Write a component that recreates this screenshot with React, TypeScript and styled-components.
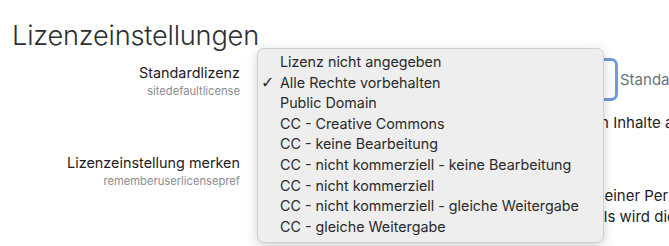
import React from "react";
import styled, { createGlobalStyle } from "styled-components";

const GlobalStyle = createGlobalStyle`
  html, body {
    margin: 0;
    height: 100%;
    background: #ffffff;
  }
  body {
    font-family: Inter, "Noto Sans", "Liberation Sans", sans-serif;
    color: #1d2125;
  }
  #root {
    min-height: 100%;
  }
`;

const options = [
  "Lizenz nicht angegeben",
  "Alle Rechte vorbehalten",
  "Public Domain",
  "CC - Creative Commons",
  "CC - keine Bearbeitung",
  "CC - nicht kommerziell - keine Bearbeitung",
  "CC - nicht kommerziell",
  "CC - nicht kommerziell - gleiche Weitergabe",
  "CC - gleiche Weitergabe",
];

const App: React.FC = () => {
  const selected = "Alle Rechte vorbehalten";
  return (
    <>
      <GlobalStyle />
      <Page>
        <Title>Lizenzeinstellungen</Title>
        <Setting>
          <LabelCol>
            <Label>Standardlizenz</Label>
            <Key>sitedefaultlicense</Key>
          </LabelCol>
          <Field>
            <ControlLine $height={43}>
              <SelectWrap>
                <Select>{selected}</Select>
                <Menu>
                  {options.map((o) => (
                    <Option key={o} $checked={o === selected}>
                      {o}
                    </Option>
                  ))}
                </Menu>
              </SelectWrap>
              <Default>Standard: Alle Rechte vorbehalten</Default>
            </ControlLine>
            <Description>
              <DescText>
                Die Standard-Lizenz für die Veröffentlichung von Inhalte auf dieser Website.
              </DescText>
            </Description>
          </Field>
        </Setting>
        <Setting>
          <LabelCol>
            <Label>Lizenzeinstellung merken</Label>
            <Key>rememberuserlicensepref</Key>
          </LabelCol>
          <Field>
            <ControlLine $height={26}>
              <Checkbox />
              <Default>Standard: Ja</Default>
            </ControlLine>
            <Description>
              <DescText>
                Wenn aktiviert, wird die zuletzt gewählte Lizenz einer Person gespeichert
                <br />
                und beim Hochladen vorausgewählt. Anderenfalls wird die Standardlizenz
                verwendet.
              </DescText>
            </Description>
          </Field>
        </Setting>
      </Page>
    </>
  );
};

export default App;

const Page = styled.div`
  box-sizing: border-box;
  min-height: 246px;
  padding: 18px 0 0 12px;
`;

const Title = styled.h2`
  margin: 0 0 4px;
  font-size: 27.2px;
  line-height: 36px;
  font-weight: 300;
  color: #2b2f33;
  letter-spacing: -0.2px;
`;

const Setting = styled.div`
  display: grid;
  grid-template-columns: 228px 1fr;
  column-gap: 23px;
  & + & {
    margin-top: 15px;
  }
`;

const LabelCol = styled.div`
  padding-top: 5px;
  text-align: right;
`;

const Label = styled.div`
  font-size: 14.4px;
  line-height: 20px;
  color: #1d2125;
`;

const Key = styled.div`
  font-size: 11.2px;
  line-height: 16px;
  color: #8a8d91;
`;

const Field = styled.div`
  min-width: 0;
`;

const ControlLine = styled.div<{ $height: number }>`
  display: flex;
  align-items: center;
  height: ${(p) => p.$height}px;
`;

const SelectWrap = styled.div`
  position: relative;
  flex: none;
`;

const Select = styled.div`
  box-sizing: border-box;
  width: 355px;
  height: 43px;
  border: 3px solid #6b9be0;
  border-radius: 7px;
  padding: 0 12px;
  display: flex;
  align-items: center;
  font-size: 15px;
  color: #1d2125;
`;

const Menu = styled.ul`
  position: absolute;
  left: -6px;
  top: -10px;
  z-index: 10;
  box-sizing: border-box;
  width: 347px;
  margin: 0;
  padding: 3px 0 5px;
  list-style: none;
  background: #eeeeee;
  border: 1px solid #cfcfcf;
  border-radius: 7px;
  box-shadow: 0 3px 12px rgba(0, 0, 0, 0.18);
`;

const Option = styled.li<{ $checked?: boolean }>`
  position: relative;
  padding-left: 22px;
  font-size: 14.3px;
  line-height: 20.6px;
  color: #2a2a2a;
  white-space: nowrap;
  &::before {
    content: ${(p) => (p.$checked ? '"✓"' : '""')};
    position: absolute;
    left: 3px;
    top: 0;
    font-size: 16px;
    font-family: "DejaVu Sans", sans-serif;
  }
`;

const Default = styled.span`
  flex: 1;
  min-width: 0;
  overflow: hidden;
  white-space: nowrap;
  margin-left: 2px;
  font-size: 15px;
  color: #6a737b;
`;

const Checkbox = styled.span`
  flex: none;
  box-sizing: border-box;
  width: 16px;
  height: 16px;
  border: 1px solid #8f959e;
  border-radius: 3px;
  background: #2f6cc4;
  margin-right: 8px;
`;

const Description = styled.div`
  margin-top: 11px;
  overflow: hidden;
`;

const DescText = styled.div`
  width: 760px;
  font-size: 15px;
  line-height: 21px;
  color: #1d2125;
`;
